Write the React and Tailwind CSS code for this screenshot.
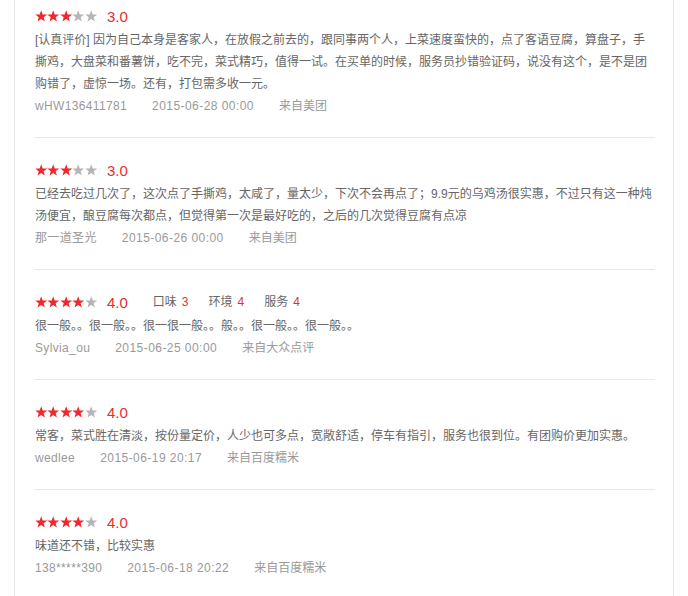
import React from "react";

const reviews = [
  {
    rating: 3,
    text: "[认真评价] 因为自己本身是客家人，在放假之前去的，跟同事两个人，上菜速度蛮快的，点了客语豆腐，算盘子，手撕鸡，大盘菜和番薯饼，吃不完，菜式精巧，值得一试。在买单的时候，服务员抄错验证码，说没有这个，是不是团购错了，虚惊一场。还有，打包需多收一元。",
    user: "wHW136411781",
    time: "2015-06-28 00:00",
    source: "来自美团",
  },
  {
    rating: 3,
    text: "已经去吃过几次了，这次点了手撕鸡，太咸了，量太少，下次不会再点了；9.9元的乌鸡汤很实惠，不过只有这一种炖汤便宜，酿豆腐每次都点，但觉得第一次是最好吃的，之后的几次觉得豆腐有点凉",
    user: "那一道圣光",
    time: "2015-06-26 00:00",
    source: "来自美团",
  },
  {
    rating: 4,
    subs: [
      ["口味", 3],
      ["环境", 4],
      ["服务", 4],
    ],
    text: "很一般。。很一般。。很一很一般。。般。。很一般。。很一般。。",
    user: "Sylvia_ou",
    time: "2015-06-25 00:00",
    source: "来自大众点评",
  },
  {
    rating: 4,
    text: "常客，菜式胜在清淡，按份量定价，人少也可多点，宽敞舒适，停车有指引，服务也很到位。有团购价更加实惠。",
    user: "wedlee",
    time: "2015-06-19 20:17",
    source: "来自百度糯米",
  },
  {
    rating: 4,
    text: "味道还不错，比较实惠",
    user: "138*****390",
    time: "2015-06-18 20:22",
    source: "来自百度糯米",
  },
];

const Star = ({ on }) => (
  <svg viewBox="0 0 12 12" className="w-[12.4px] h-[12px]">
    <polygon
      points="6,0.3 7.53,4.4 11.9,4.58 8.47,7.3 9.65,11.52 6,9.1 2.35,11.52 3.53,7.3 0.1,4.58 4.47,4.4"
      fill={on ? "#ec2a2f" : "#b5b5b5"}
    />
  </svg>
);

const Review = ({ r, first, last }) => (
  <div
    className={`${first ? "pt-[4px]" : "pt-[20px]"} pb-[20px] ${
      last ? "" : "border-b border-[#e8e8e8]"
    }`}
  >
    <div className="h-[24px] flex items-center">
      <div className="flex">
        {[1, 2, 3, 4, 5].map((i) => (
          <Star key={i} on={i <= r.rating} />
        ))}
      </div>
      <span className="ml-[10px] text-[15px] text-[#e52e2e] leading-none">
        {r.rating}.0
      </span>
      {r.subs && (
        <div className="ml-[25px] flex gap-[20px] text-[12px] text-[#666]">
          {r.subs.map(([k, v]) => (
            <span key={k}>
              {k}
              <span className="ml-[5px] text-[#e52e2e]">{v}</span>
            </span>
          ))}
        </div>
      )}
    </div>
    <p className="mt-[1px] text-[12px] leading-[22px] text-[#666]">{r.text}</p>
    <div className="flex gap-[25px] text-[12px] leading-[22px] text-[#999]">
      <span className="tracking-[0.35px]">{r.user}</span>
      <span className="tracking-[0.45px]">{r.time}</span>
      <span>{r.source}</span>
    </div>
  </div>
);

export default function App() {
  return (
    <div
      className="min-h-screen bg-white"
      style={{ fontFamily: '"Liberation Sans", "Noto Sans CJK SC", sans-serif' }}
    >
      <div className="ml-[14px] w-[660px] min-h-screen border-x border-[#e5e5e5] pl-[20px] pr-[18px]">
        {reviews.map((r, i) => (
          <Review key={i} r={r} first={i === 0} last={i === reviews.length - 1} />
        ))}
      </div>
    </div>
  );
}
